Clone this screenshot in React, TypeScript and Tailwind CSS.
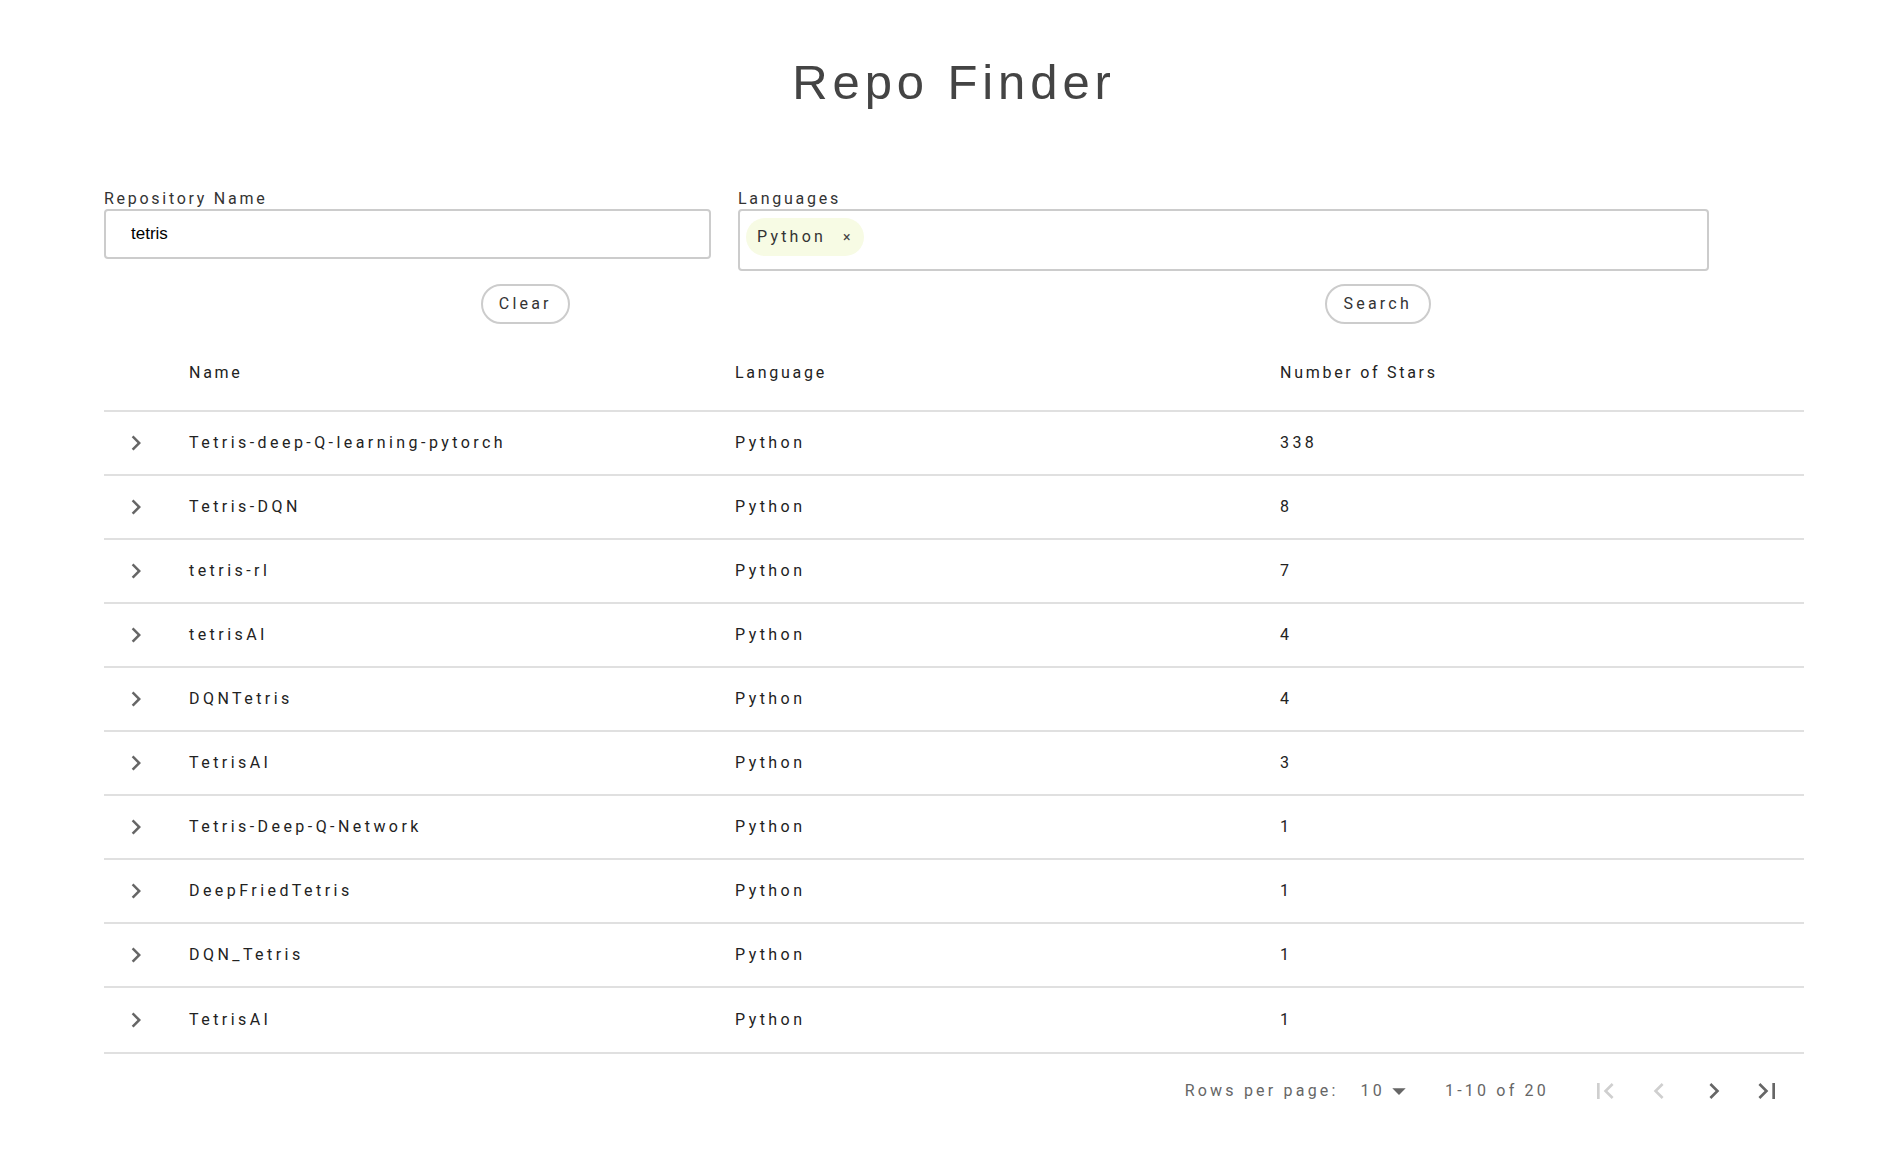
import React from 'react'

const ROBOTO = "Roboto, 'Liberation Sans', Arial, sans-serif"
const ARIAL = "'Liberation Sans', Arial, sans-serif"

const repos = [
  { name: 'Tetris-deep-Q-learning-pytorch', language: 'Python', stars: 338 },
  { name: 'Tetris-DQN', language: 'Python', stars: 8 },
  { name: 'tetris-rl', language: 'Python', stars: 7 },
  { name: 'tetrisAI', language: 'Python', stars: 4 },
  { name: 'DQNTetris', language: 'Python', stars: 4 },
  { name: 'TetrisAI', language: 'Python', stars: 3 },
  { name: 'Tetris-Deep-Q-Network', language: 'Python', stars: 1 },
  { name: 'DeepFriedTetris', language: 'Python', stars: 1 },
  { name: 'DQN_Tetris', language: 'Python', stars: 1 },
  { name: 'TetrisAI', language: 'Python', stars: 1 },
]

function Icon({ d, className }: { d: string; className?: string }) {
  return (
    <svg viewBox="0 0 24 24" className={className} fill="currentColor">
      <path d={d} />
    </svg>
  )
}

const CHEVRON_RIGHT = 'M8.59 16.59 13.17 12 8.59 7.41 10 6l6 6-6 6-1.41-1.41z'
const CHEVRON_LEFT = 'M15.41 16.59 10.83 12l4.58-4.59L14 6l-6 6 6 6 1.41-1.41z'
const FIRST_PAGE = 'M18.41 16.59 13.82 12l4.59-4.59L17 6l-6 6 6 6zM6 6h2v12H6z'
const LAST_PAGE = 'M5.59 7.41 10.18 12l-4.59 4.59L7 18l6-6-6-6zM16 6h2v12h-2z'
const DROP_DOWN = 'M7 10l5 5 5-5z'

export default function App() {
  return (
    <div className="min-h-screen bg-white" style={{ fontFamily: ROBOTO }}>
      <div className="ml-[104px] w-[1700px]">
        {/* title */}
        <h1
          className="pt-[58px] text-center text-[49px] leading-[48px] tracking-[0.1em] text-[#444]"
          style={{ fontFamily: ARIAL }}
        >
          Repo Finder
        </h1>

        {/* search form */}
        <div className="mt-[83px] flex items-start gap-[27px]">
          <div className="w-[607px]">
            <label className="block text-[16px] leading-[20px] tracking-[0.17em] text-[#333]">
              Repository Name
            </label>
            <div className="flex h-[50px] items-center rounded-[4px] border-2 border-[#cccccc] pl-[25px]">
              <span className="text-[17px] text-black" style={{ fontFamily: ARIAL }}>
                tetris
              </span>
            </div>
          </div>
          <div className="w-[971px]">
            <label className="block text-[16px] leading-[20px] tracking-[0.17em] text-[#333]">
              Languages
            </label>
            <div className="flex h-[62px] items-start rounded-[4px] border-2 border-[#cccccc] pl-[6px] pt-[7px]">
              <div className="flex h-[38px] items-center gap-[17px] rounded-full bg-[#f7fbe4] pl-[11px] pr-[14px]">
                <span className="text-[16px] tracking-[0.2em] text-[#333]">Python</span>
                <span className="text-[14px] text-[#444]">×</span>
              </div>
            </div>
          </div>
        </div>

        {/* actions */}
        <div className="-ml-[5px] mt-[13px] grid grid-cols-2">
          <div className="flex justify-center">
            <button className="h-[40px] w-[89px] rounded-full border-2 border-[#cccccc] text-[16px] tracking-[0.2em] text-[#333]">
              Clear
            </button>
          </div>
          <div className="flex justify-center">
            <button className="h-[40px] w-[106px] rounded-full border-2 border-[#cccccc] text-[16px] tracking-[0.2em] text-[#333]">
              Search
            </button>
          </div>
        </div>

        {/* table */}
        <div className="mt-[9px]">
          <div className="grid h-[79px] grid-cols-[85px_546px_545px_1fr] items-center border-b-2 border-[#e0e0e0] pt-[2px] text-[16px] tracking-[0.17em] text-[#222]">
            <div />
            <div>Name</div>
            <div>Language</div>
            <div>Number of Stars</div>
          </div>
          {repos.map((r, i) => (
            <div
              key={i}
              className={`grid grid-cols-[85px_546px_545px_1fr] items-center border-b-2 border-[#e0e0e0] text-[16px] tracking-[0.215em] text-[#222] ${
                i === repos.length - 1 ? 'h-[66px]' : 'h-[64px]'
              }`}
            >
              <div className="pl-[17px]">
                <Icon d={CHEVRON_RIGHT} className="h-[30px] w-[30px] text-[#666]" />
              </div>
              <div>{r.name}</div>
              <div>{r.language}</div>
              <div>{r.stars}</div>
            </div>
          ))}
        </div>

        {/* pagination */}
        <div className="flex h-[74px] items-center justify-end pr-[21px] text-[16px] tracking-[0.2em] text-[#666]">
          <span>Rows per page:</span>
          <span className="ml-[22px]">10</span>
          <Icon d={DROP_DOWN} className="-ml-[2px] h-[32px] w-[32px] text-[#666]" />
          <span className="ml-[30px]">1-10 of 20</span>
          <Icon d={FIRST_PAGE} className="ml-[40px] h-[32px] w-[32px] text-[#cfcfcf]" />
          <Icon d={CHEVRON_LEFT} className="ml-[22px] h-[32px] w-[32px] text-[#cfcfcf]" />
          <Icon d={CHEVRON_RIGHT} className="ml-[23px] h-[32px] w-[32px] text-[#666]" />
          <Icon d={LAST_PAGE} className="ml-[21px] h-[32px] w-[32px] text-[#666]" />
        </div>
      </div>
    </div>
  )
}
